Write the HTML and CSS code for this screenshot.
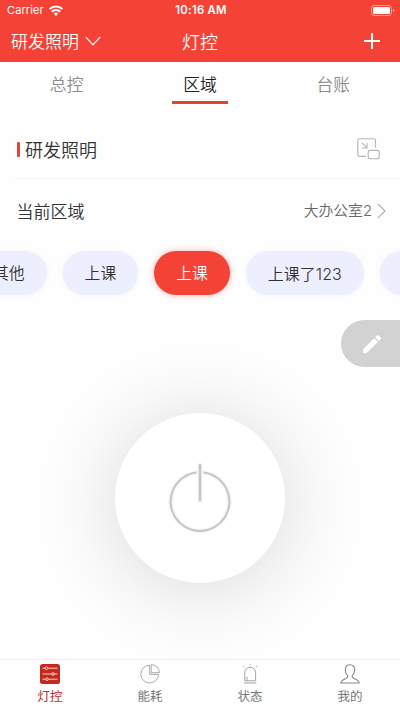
FILE: index.html
```html
<!DOCTYPE html>
<html lang="zh-CN">
<head>
<meta charset="utf-8">
<meta name="viewport" content="width=device-width, initial-scale=1">
<title>灯控</title>
<link rel="stylesheet" href="styles.css">
</head>
<body>
<div class="app">
  <header class="header">
    <div class="status">
      <div class="carrier"><span>Carrier</span>
        <svg width="14" height="11" viewBox="0 0 14 11" fill="none" stroke="#fff" stroke-width="2.1"><path d="M.6 4.1a9 9 0 0 1 12.8 0M2.8 6.7a6 6 0 0 1 8.4 0"/><path d="M7 11 4.7 8.6a3.3 3.3 0 0 1 4.6 0z" fill="#fff" stroke="none"/></svg>
      </div>
      <div class="time">10:16 AM</div>
      <div class="battery">
        <svg width="24" height="11" viewBox="0 0 24 11"><rect x=".5" y=".5" width="20" height="10" rx="2.8" fill="none" stroke="#fff" stroke-opacity=".5"/><rect x="2" y="2" width="17" height="7" rx="1.5" fill="#fff"/><path d="M22 3.7c1.7.6 1.7 3 0 3.6z" fill="#fff" fill-opacity=".5"/></svg>
      </div>
    </div>
    <div class="navbar">
      <div class="place"><span>研发照明</span>
        <svg width="16" height="10" viewBox="0 0 16 10" fill="none" stroke="#fff" stroke-width="1.2"><path d="m.7.8 7.3 8 7.3-8"/></svg>
      </div>
      <h1 class="title">灯控</h1>
      <div class="add">
        <svg width="16" height="16" viewBox="0 0 16 16" stroke="#fff" stroke-width="2"><path d="M0 8h16M8 0v16"/></svg>
      </div>
    </div>
  </header>

  <nav class="tabs">
    <span class="tab">总控</span>
    <span class="tab tab-on">区域</span>
    <span class="tab">台账</span>
  </nav>

  <section class="group">
    <h2 class="group-name">研发照明</h2>
    <svg width="23" height="22" viewBox="0 0 23 22" fill="none" stroke="#b5b5b5" stroke-width="1.1" stroke-linejoin="round"><path d="M9 18.4H2.6A1.8 1.8 0 0 1 .8 16.6V2.5A1.8 1.8 0 0 1 2.6.7h14.1a1.8 1.8 0 0 1 1.8 1.8v7.3"/><path d="m5 4.8 5 5M10 5v5H5"/><rect x="11.2" y="12.4" width="11" height="8.4" rx="2"/></svg>
  </section>

  <section class="current">
    <span class="current-label">当前区域</span>
    <span class="current-value">大办公室2</span>
    <svg width="9" height="16" viewBox="0 0 9 16" fill="none" stroke="#aaa" stroke-width="1.1"><path d="M.8.9 8 8 .8 15.1"/></svg>
  </section>

  <div class="scenes">
    <span class="pill">其他</span>
    <span class="pill">上课</span>
    <span class="pill pill-on">上课</span>
    <span class="pill pill-wide">上课了123</span>
    <span class="pill"></span>
  </div>

  <main class="stage">
    <div class="edit">
      <svg width="20" height="20" viewBox="0 0 20 20" fill="#fff"><path d="M1 15.3 12.2 4.2l3.7 3.7L4.7 19H1zM13.2 3.2l1.8-1.8a1.1 1.1 0 0 1 1.6 0l2.1 2.1a1.1 1.1 0 0 1 0 1.6l-1.8 1.8z"/></svg>
    </div>
    <div class="power">
      <svg width="70" height="76" viewBox="0 0 70 76" fill="none" stroke="#c5c5c5"><path stroke-width="1.8" d="M31.5 12.4a29.4 29.4 0 1 0 7 0"/><path stroke-width="2.4" d="M35 4v37.300"/></svg>
    </div>
  </main>

  <footer class="bottom">
    <div class="item item-on">
      <svg width="20" height="20" viewBox="0 0 20 20"><rect width="20" height="20" rx="2.5" fill="#c5291d"/><g fill="none" stroke="#ffe1dc" stroke-width=".9"><path d="M2.5 4.2h2.6M7.9 4.2h9.6M2.5 10h9.1M14.4 10h3.1M2.5 15.2h3.1M8.4 15.2h9.1"/><circle cx="6.5" cy="4.2" r="1.3"/><circle cx="13" cy="10" r="1.3"/><circle cx="7" cy="15.2" r="1.3"/></g></svg>
      <span>灯控</span>
    </div>
    <div class="item">
      <svg width="20" height="20" viewBox="0 0 20 20" fill="none" stroke="#a2a2a2" stroke-width=".9"><path d="M9.700 1.200a8.900 8.900 0 1 0 8.900 9.200H9.700z"/><path d="M11.200.6v8.100h8.200A8.200 8.200 0 0 0 11.200.6z"/></svg>
      <span>能耗</span>
    </div>
    <div class="item">
      <svg width="20" height="20" viewBox="0 0 20 20" fill="none" stroke="#999" stroke-width=".9"><path d="M4.8 16.8V8.600a5.400 5.400 0 0 1 10.800 0v8.200zM7 12.700v4M4 19h12.400M9.500.9h1M3.300 2l.9 1.200M17 2l-.9 1.200"/></svg>
      <span>状态</span>
    </div>
    <div class="item">
      <svg width="20" height="20" viewBox="0 0 20 20" fill="none" stroke="#888" stroke-width="1.1" stroke-linejoin="round"><path d="M10 .7C6.8.7 5.300 2.800 5.300 5.800c0 2.900 1 4.700 2.500 6.200.4 1.300-.6 2-2.500 2.800C2.500 16 .9 16.700.8 19h18.400c-.1-2.300-1.700-3-4.500-4.200-1.900-.8-2.900-1.500-2.500-2.800 1.500-1.500 2.500-3.300 2.500-6.200C14.700 2.800 13.200.7 10 .7z"/></svg>
      <span>我的</span>
    </div>
  </footer>
</div>
</body>
</html>
```
FILE: styles.css
```css
* { box-sizing: border-box; }

body {
  margin: 0;
  background: #fefefe;
  color: #333;
  font-family: "Noto Sans CJK SC", sans-serif;
  font-weight: 350;
}

svg { display: block; flex: none; }

.app {
  width: 400px;
  height: 710px;
  display: flex;
  flex-direction: column;
  overflow: hidden;
}

.header {
  height: 62px;
  background: #f44336;
  color: #fff;
}

.status {
  height: 20px;
  display: grid;
  grid-template-columns: 1fr auto 1fr;
  align-items: center;
  padding: 1px 5px 0 7px;
  font-family: Inter, sans-serif;
  font-size: 11px;
  line-height: 19px;
}

.carrier { display: flex; align-items: center; gap: 5px; font-weight: 400; letter-spacing: .1px; }
.time { font-weight: 600; font-size: 11.3px; letter-spacing: .25px; }
.battery { justify-self: end; }

.navbar {
  height: 42px;
  display: grid;
  grid-template-columns: 1fr auto 1fr;
  align-items: center;
  padding: 0 20px 0 11px;
}

.place { display: flex; align-items: center; gap: 6px; font-size: 17px; line-height: 26px; }
.title { margin: 0 0 0 9px; font-size: 18px; line-height: 26px; font-weight: inherit; }
.add { justify-self: end; }

.tabs {
  height: 42px;
  display: grid;
  grid-template-columns: repeat(3, 1fr);
  justify-items: center;
}

.tab {
  width: 56px;
  height: 42px;
  padding-top: 9px;
  color: #8c8c8c;
  font-size: 16.800px;
  line-height: 26px;
  text-align: center;
}

.tab-on { color: #222; border-bottom: 3px solid #e64238; }

.group {
  height: 75px;
  margin: 0 0 0 15px;
  padding: 16px 20px 0 1.5px;
  display: flex;
  align-items: center;
  border-bottom: 1px solid #f4f4f4;
}

.group-name {
  margin: 0;
  flex: 1;
  display: flex;
  align-items: center;
  gap: 5.5px;
  font-size: 18px;
  line-height: 26px;
  font-weight: inherit;
}

.group-name::before {
  content: "";
  width: 3px;
  height: 15px;
  border-radius: 1px;
  background: #e64238;
}

.current {
  height: 72px;
  padding: 0 14px 9px 16.5px;
  display: flex;
  align-items: center;
}

.current-label { flex: 1; font-size: 17px; line-height: 26px; }
.current-value {
  margin-right: 5px;
  color: #666;
  font-family: Inter, "Noto Sans CJK SC", sans-serif;
  font-size: 14.8px;
  line-height: 24px;
}

.scenes {
  height: 44px;
  display: flex;
  gap: 16px;
  margin-left: -29px;
}

.pill {
  flex: none;
  width: 75.6px;
  height: 44px;
  border-radius: 22px;
  background: #eeeffe;
  box-shadow: 0 0 5px rgba(238, 239, 254, .7);
  font-family: Inter, "Noto Sans CJK SC", sans-serif;
  font-size: 15.8px;
  line-height: 46px;
  text-align: center;
}

.pill-on {
  background: #f44336;
  box-shadow: 0 0 6px rgba(244, 67, 54, .4);
  color: #fff;
}

.pill-wide { width: 118px; font-size: 16px; }

.stage {
  position: relative;
  flex: 1;
  overflow: hidden;
  display: flex;
  justify-content: center;
  align-items: flex-start;
  padding-top: 118px;
}

.edit {
  position: absolute;
  top: 25px;
  right: 0;
  width: 59px;
  height: 47px;
  padding: 14px 0 0 21px;
  border-radius: 24px 0 0 24px;
  background: #d2d2d2;
}

.power {
  width: 170px;
  height: 170px;
  border-radius: 50%;
  background: #fff;
  box-shadow: 0 5px 84px rgba(0, 0, 0, .16);
  display: flex;
  justify-content: center;
  padding-top: 47px;
}

.power svg { filter: drop-shadow(0 0 1px rgba(0, 0, 0, .16)); }

.bottom {
  height: 51px;
  display: grid;
  grid-template-columns: repeat(4, 1fr);
  border-top: 1px solid #f1f1f1;
  background: #fefefe;
}

.item {
  display: flex;
  flex-direction: column;
  align-items: center;
  padding-top: 4px;
  color: #777;
  font-size: 12.5px;
  font-weight: 400;
  line-height: 18px;
}

.item span { margin-top: 3px; }
.item-on { color: #c5291d; }
```
